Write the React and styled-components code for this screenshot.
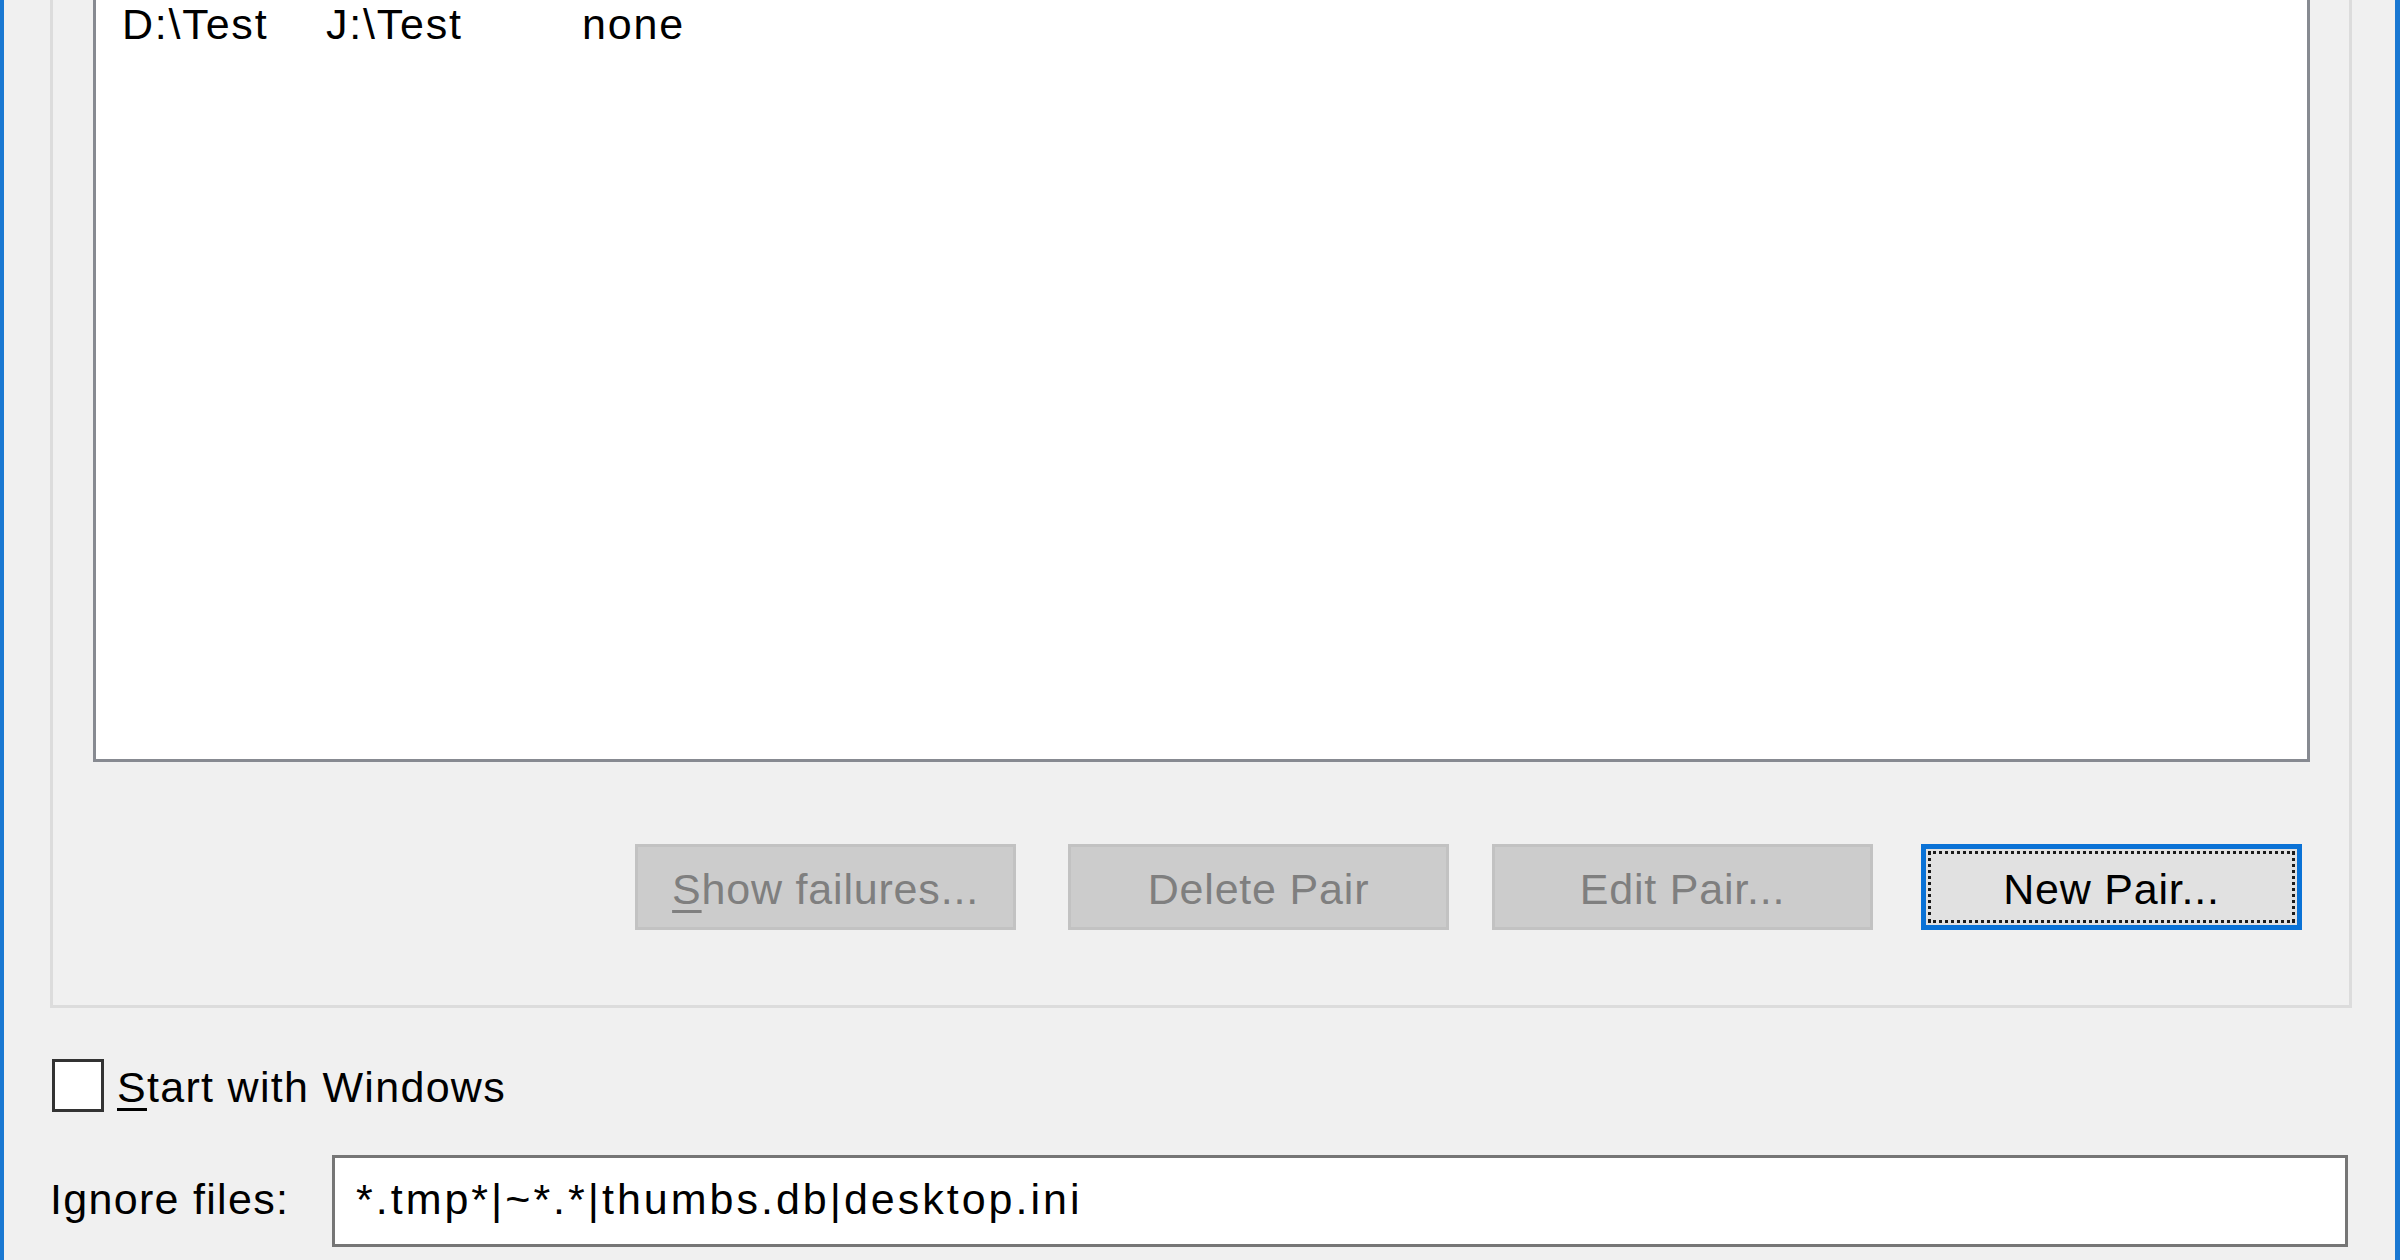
import React from 'react'
import styled, { createGlobalStyle } from 'styled-components'

const GlobalStyle = createGlobalStyle`
  html, body {
    margin: 0;
    padding: 0;
    background: #f0f0f0;
    overflow: hidden;
  }
  * { box-sizing: border-box; }
`

// styled components
const Window = styled.div`
  width: 2400px;
  height: 1260px;
  overflow: hidden;
  display: flex;
  flex-direction: column;
  background: #f0f0f0;
  border-left: 4px solid #1a78d2;
  border-right: 5px solid #1a78d2;
  padding: 0 43px 0 46px;
  font-family: "Liberation Sans", Arial, sans-serif;
  font-size: 43px;
  line-height: 50px;
  letter-spacing: 1.3px;
  color: #000;
`
const GroupBox = styled.div`
  margin-top: -40px;
  border: 3px solid #dcdcdc;
  padding: 0 39px 75px 40px;
  display: flex;
  flex-direction: column;
`
const ListView = styled.div`
  height: 799px;
  background: #fff;
  border: 3px solid #878a91;
  padding: 33px 0 0 26px;
`
const ListRow = styled.div`
  display: grid;
  grid-template-columns: 204px 256px auto;
  height: 50px;
  letter-spacing: 1.8px;
`
const Cell = styled.span`
  white-space: nowrap;
`
const ButtonBar = styled.div`
  margin-top: 82px;
  display: flex;
  justify-content: flex-end;
  padding-right: 8px;
`
const Button = styled.button`
  position: relative;
  width: 381px;
  height: 86px;
  margin-left: ${p => p.$space || 0}px;
  padding: 4px 0 0;
  font: inherit;
  letter-spacing: 0.8px;
  background: ${p => (p.$primary ? '#e1e1e1' : '#cccccc')};
  color: ${p => (p.disabled ? '#7f7f7f' : '#000')};
  border: ${p => (p.$primary ? '5px solid #0a72d6' : '3px solid #c2c2c2')};
  cursor: default;

  &::after {
    content: '';
    display: ${p => (p.$primary ? 'block' : 'none')};
    position: absolute;
    inset: 2px;
    border: 3px dotted #1a1a1a;
  }
`
const Mnemonic = styled.span`
  text-decoration: underline;
  text-decoration-thickness: 3px;
  text-underline-offset: 6px;
`
const CheckRow = styled.label`
  margin-top: 51px;
  margin-left: 2px;
  display: flex;
  align-items: center;
  gap: 13px;
  height: 53px;
`
const CheckBox = styled.span`
  width: 52px;
  height: 53px;
  background: #fff;
  border: 3px solid #333;
  flex: 0 0 auto;
`
const CheckText = styled.span`
  padding-top: 3px;
`
const FieldRow = styled.div`
  margin-top: 43px;
  display: flex;
  align-items: center;
  height: 92px;
`
const FieldLabel = styled.span`
  width: 282px;
  flex: 0 0 auto;
  padding-bottom: 5px;
`
const TextBox = styled.div`
  flex: 1;
  height: 92px;
  margin-right: 4px;
  background: #fff;
  border: 3px solid #767676;
  padding: 0 0 5px 21px;
  display: flex;
  align-items: center;
  letter-spacing: 3px;
  white-space: nowrap;
`

const pairs = [
    { source: 'D:\\Test', target: 'J:\\Test', failures: 'none' }
]

export default function App() {
    return (
        <Window>
            <GlobalStyle />
            <GroupBox>
                <ListView>
                    {pairs.map(p => (
                        <ListRow key={p.source}>
                            <Cell>{p.source}</Cell>
                            <Cell>{p.target}</Cell>
                            <Cell>{p.failures}</Cell>
                        </ListRow>
                    ))}
                </ListView>
                <ButtonBar>
                    <Button disabled><Mnemonic>S</Mnemonic>how failures...</Button>
                    <Button disabled $space={52}>Delete Pair</Button>
                    <Button disabled $space={43}>Edit Pair...</Button>
                    <Button $primary $space={48}>New Pair...</Button>
                </ButtonBar>
            </GroupBox>
            <CheckRow>
                <CheckBox />
                <CheckText><Mnemonic>S</Mnemonic>tart with Windows</CheckText>
            </CheckRow>
            <FieldRow>
                <FieldLabel>Ignore files:</FieldLabel>
                <TextBox>*.tmp*|~*.*|thumbs.db|desktop.ini</TextBox>
            </FieldRow>
        </Window>
    )
}
